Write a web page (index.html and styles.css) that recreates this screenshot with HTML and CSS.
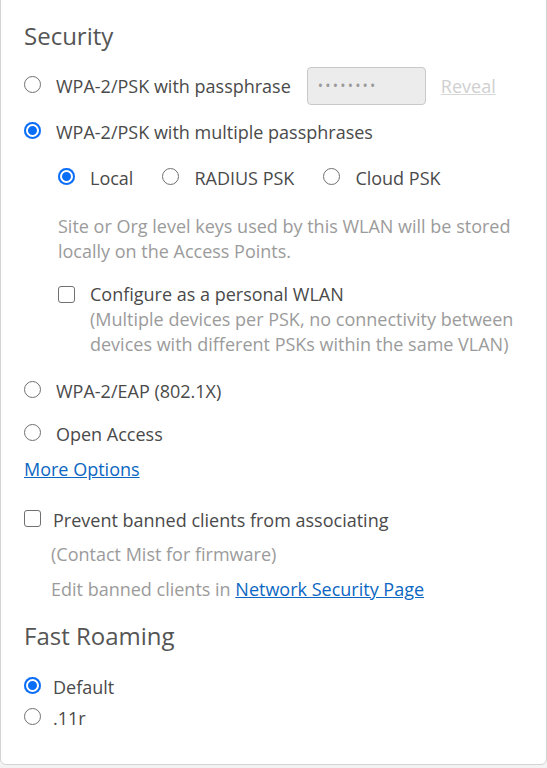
FILE: index.html
```html
<!DOCTYPE html>
<html lang="en">
<head>
<meta charset="utf-8">
<title>WLAN Security</title>
<link rel="stylesheet" href="styles.css">
</head>
<body>
<div class="card">
  <h2 class="title">Security</h2>

  <div class="option opt-psk">
    <span class="radio"></span>
    <span class="label">WPA-2/PSK with passphrase</span>
    <span class="pw">••••••••</span>
    <a class="reveal">Reveal</a>
  </div>

  <div class="option opt-multi">
    <span class="radio checked"></span>
    <span class="label">WPA-2/PSK with multiple passphrases</span>
  </div>

  <div class="sub">
    <div class="subopts">
      <div class="subopt"><span class="radio checked"></span><span class="label">Local</span></div>
      <div class="subopt"><span class="radio"></span><span class="label">RADIUS PSK</span></div>
      <div class="subopt"><span class="radio"></span><span class="label">Cloud PSK</span></div>
    </div>
    <p class="help help-keys">Site or Org level keys used by this WLAN will be stored locally on the Access Points.</p>
    <div class="check-row">
      <span class="checkbox"></span>
      <div class="check-text">
        <div class="label">Configure as a personal WLAN</div>
        <div class="help">(Multiple devices per PSK, no connectivity between devices with different PSKs within the same VLAN)</div>
      </div>
    </div>
  </div>

  <div class="option opt-eap">
    <span class="radio"></span>
    <span class="label">WPA-2/EAP (802.1X)</span>
  </div>

  <div class="option opt-open">
    <span class="radio"></span>
    <span class="label">Open Access</span>
  </div>

  <a class="link more">More Options</a>

  <div class="option tight opt-ban">
    <span class="checkbox"></span>
    <span class="label">Prevent banned clients from associating</span>
  </div>
  <p class="help note note-contact">(Contact Mist for firmware)</p>
  <p class="help note note-edit">Edit banned clients in <a class="link">Network Security Page</a></p>

  <h2 class="title title-roam">Fast Roaming</h2>

  <div class="option tight opt-default">
    <span class="radio checked"></span>
    <span class="label">Default</span>
  </div>
  <div class="option tight opt-11r">
    <span class="radio"></span>
    <span class="label">.11r</span>
  </div>
</div>
</body>
</html>
```
FILE: styles.css
```css
* { box-sizing: border-box; }

html, body {
  margin: 0;
  padding: 0;
  background: #f3f3f3;
}

body {
  font-family: "Open Sans", "Liberation Sans", sans-serif;
  font-size: 18px;
  color: #4a4a4a;
}

.card {
  margin-top: -6px;
  background: #fff;
  border: 1px solid #d3d3d3;
  border-radius: 6px;
  padding: 25px 23px 33px 23px;
}

.title {
  margin: 0;
  font-size: 24px;
  font-weight: 400;
  line-height: 32px;
  color: #555;
}

.option {
  display: flex;
  align-items: center;
  line-height: 25px;
}

.option .radio,
.option .checkbox {
  margin-right: 15px;
}

.option.tight .radio,
.option.tight .checkbox {
  margin-right: 12px;
}

.radio {
  flex: none;
  display: inline-block;
  width: 17px;
  height: 17px;
  border-radius: 50%;
  border: 1px solid #707070;
  background: #fff;
  position: relative;
  top: -2px;
}

.radio.checked {
  border: none;
  background: #0b6ef6;
  box-shadow: inset 0 0 0 2px #0b6ef6, inset 0 0 0 4px #fff;
}

.checkbox {
  flex: none;
  display: inline-block;
  width: 17px;
  height: 17px;
  border-radius: 3px;
  border: 1px solid #707070;
  background: #fff;
  position: relative;
  top: -2px;
}

.opt-psk {
  margin-top: 15px;
  height: 38px;
}

.pw {
  margin-left: 16px;
  width: 119px;
  height: 38px;
  background: #ececec;
  border: 1px solid #c9c9c9;
  border-radius: 4px;
  padding-left: 10px;
  font-size: 14px;
  letter-spacing: 2.2px;
  color: #9a9a9a;
  line-height: 36px;
}

.reveal {
  margin-left: 15px;
  color: #d0d0d0;
  text-decoration: underline;
  text-decoration-color: #d8d8d8;
}

.opt-multi { margin-top: 15px; }

.sub {
  padding-left: 34px;
}

.subopts {
  display: flex;
  margin-top: 21px;
  line-height: 25px;
}

.subopt {
  display: flex;
  align-items: center;
  margin-right: 29px;
}

.subopt .radio { margin-right: 15px; }

.help {
  color: #9b9b9b;
  line-height: 25px;
  margin: 0;
}

.help-keys {
  margin-top: 23px;
}

.check-row {
  display: flex;
  align-items: flex-start;
  margin-top: 18px;
  line-height: 25px;
}

.check-row .checkbox {
  margin-right: 15px;
  top: 4px;
}

.check-text { flex: 1; }

.opt-eap { margin-top: 22px; }
.opt-open { margin-top: 18px; }

.link {
  color: #0c67c2;
  text-decoration: underline;
  cursor: pointer;
}

.more {
  display: block;
  margin-top: 10px;
  line-height: 25px;
}

.opt-ban { margin-top: 26px; }

.note { padding-left: 27px; }
.note-contact { margin-top: 9px; }
.note-edit { margin-top: 10px; }

.title-roam { margin-top: 18px; }

.opt-default { margin-top: 23px; }
.opt-11r { margin-top: 6px; }
```
